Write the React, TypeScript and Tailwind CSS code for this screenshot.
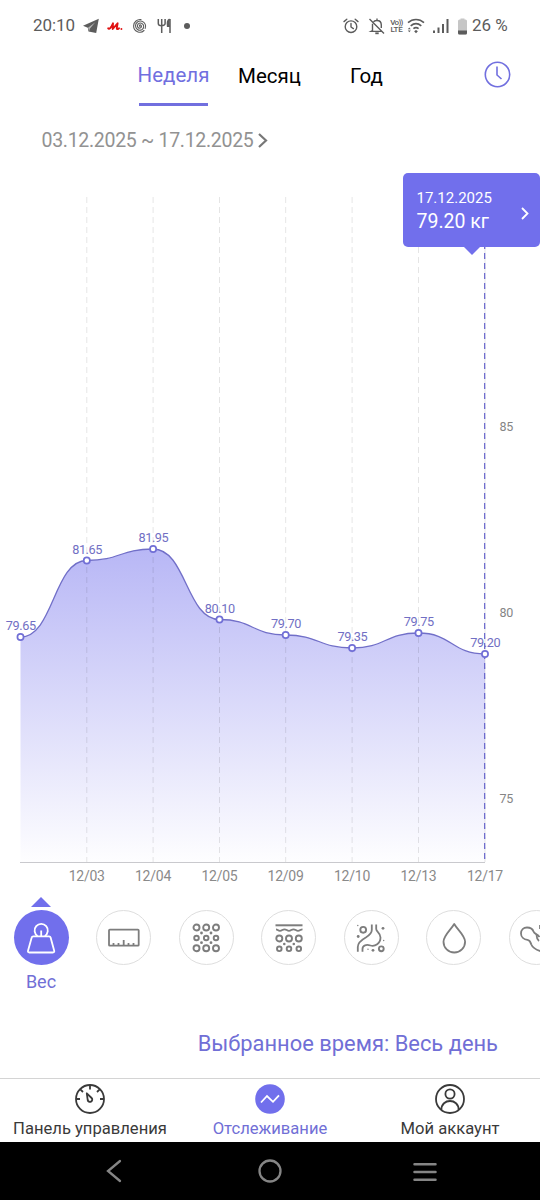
import React from 'react';

interface WeightPoint {
  x: number;
  y: number;
  value: string;
  date?: string;
}

const points: WeightPoint[] = [
  { x: 20.5, y: 637, value: '79.65' },
  { x: 86.8, y: 560.5, value: '81.65', date: '12/03' },
  { x: 153.1, y: 549, value: '81.95', date: '12/04' },
  { x: 219.5, y: 619.5, value: '80.10', date: '12/05' },
  { x: 285.7, y: 635, value: '79.70', date: '12/09' },
  { x: 352.1, y: 648, value: '79.35', date: '12/10' },
  { x: 418.5, y: 633, value: '79.75', date: '12/13' },
  { x: 485, y: 654, value: '79.20', date: '12/17' },
];

const yLabels = [
  { y: 427, text: '85' },
  { y: 613, text: '80' },
  { y: 799, text: '75' },
];

const CHART_BOTTOM = 862;

// smooth line with flat tangents at every point
const linePath = points.reduce((path, p, i) => {
  if (i === 0) return `M${p.x} ${p.y}`;
  const prev = points[i - 1];
  const mid = (prev.x + p.x) / 2;
  return `${path} C${mid} ${prev.y} ${mid} ${p.y} ${p.x} ${p.y}`;
}, '');
const areaPath = `${linePath} V${CHART_BOTTOM} H${points[0].x} Z`;

const StatusBar: React.FC = () => (
  <div className="flex h-[50px] items-center pt-0.5 text-[#5c5c5c]">
    <span className="ml-[33px] w-[50px] text-[17px] tracking-[-0.1px]">20:10</span>
    <svg className="h-4 w-4" viewBox="0 0 16 16" fill="currentColor">
      <path d="M0 7.8 15.800 .8 13.2 15 5.500 13.500 4.800 9.800Z" />
      <path d="M5 9.800 12.300 4.300 6.800 10.800 6.300 13Z" fill="#fff" fillOpacity="0.550" />
    </svg>
    <svg className="ml-2 h-4 w-4" viewBox="0 0 16 16" fill="none" stroke="#e01212" strokeWidth="1.9" strokeLinecap="round" strokeLinejoin="round">
      <path d="M1.2 10.3C2 12 4 10 6 5.3L5.7 11 10.6 5.3 9.800 10.3C9.800 11.500 11.300 11.4 12 10.3" />
      <path d="M14.4 11v.1" />
    </svg>
    <svg className="ml-[10px] h-[14px] w-[14px]" viewBox="0 0 14 14" fill="none" stroke="currentColor" strokeWidth="1.1" strokeLinecap="round">
      <path d="M7 7.4C6.2 7.4 6.2 6 7.1 5.9 8.6 5.8 9 8 7.7 8.8 6 9.8 4.2 8.4 4.4 6.5 4.7 4.2 7.4 3.3 9.2 4.6 11.5 6.2 11 9.6 8.7 10.8 5.7 12.2 2.5 9.9 2.5 6.8 2.5 3.5 5.7 1.4 8.9 2.3 12 3.3 13.4 6.5 12.2 9.4" />
      <path d="M11 11.5C7.5 15 .6 12.6.6 7 .6 2.5 4.5.2 8 .6" />
    </svg>
    <svg className="ml-[10px] h-4 w-4" viewBox="0 0 16 16" fill="none" stroke="currentColor" strokeWidth="1.5">
      <path d="M1.300 1v4.500c0 3 6.800 3 6.800 0V1M4.7 1v14" />
      <path d="M13 1v14M12.600 1.3C10 2.5 10.300 6.5 10.600 8.3H12.800" fill="currentColor" />
    </svg>
    <span className="ml-[11px] h-[6px] w-[6px] rounded-full bg-current" />

    <svg className="ml-[153px] h-[16px] w-[16px]" viewBox="0 0 16 16" fill="none" stroke="currentColor" strokeWidth="1.4" strokeLinecap="round">
      <circle cx="8" cy="8.7" r="5.8" />
      <path d="M8 5.5V9l2.4 1.6M1 3.6 3.8 1.3M15 3.6 12.2 1.3" />
    </svg>
    <svg className="ml-[9px] h-[17px] w-[18px]" viewBox="0 0 18 17" fill="none" stroke="currentColor" strokeWidth="1.4">
      <path d="M1.5 1 16 15.5M4.5 5.7V12.5L3 13.4H13.5M5.5 3.8C7 2.5 8 2.5 9 2.5c2.8 0 4.3 2 4.3 4.5v3M9 .5v2" />
      <path d="M7.3 15.3H10.7" strokeWidth="1.8" />
    </svg>
    <div className="ml-[3px] flex w-[15px] flex-col items-center text-[8px] font-medium leading-[7px]">
      <span className="tracking-[-0.7px]">Vo))</span>
      <span className="tracking-[-0.2px]">LTE</span>
    </div>
    <svg className="ml-[3px] h-4 w-[18px]" viewBox="0 0 18 16" fill="none" stroke="currentColor" strokeWidth="1.6">
      <path d="M1 4.7C5.7.4 12.3.4 17 4.7M3.7 7.8C7 5 11 5 14.3 7.8M6.4 10.7c1.7-1.4 3.5-1.4 5.2 0" />
      <path d="m9 12-1.9 1.3L9 15.2l1.9-1.9Z" fill="currentColor" stroke="none" />
      <path d="M2.300 9.500 .8 11.200H3.800ZM2.300 14.200 .8 12.500H3.800Z" fill="currentColor" stroke="none" />
    </svg>
    <svg className="ml-[8px] h-4 w-4" viewBox="0 0 16 16" fill="currentColor">
      <path d="M0 12.500h2V15H0zM4.5 9.500h2V15h-2zM9 6h2v9H9zM13.5 1h2v14h-2z" />
    </svg>
    <svg className="ml-[9px] h-[17px] w-[9px]" viewBox="0 0 9 17">
      <path d="M2.5 1.5V.5h4v1h1q1.5 0 1.5 1.5v12q0 1.5-1.5 1.5h-6Q0 16.500 0 15V3Q0 1.500 1.500 1.500Z" fill="#c6c6c6" />
      <path d="M0 12.500h9V15q0 1.500-1.500 1.500h-6Q0 16.500 0 15Z" fill="#5c5c5c" />
    </svg>
    <span className="ml-[5px] whitespace-nowrap text-[17px]">26 %</span>
  </div>
);

const PeriodTabs: React.FC = () => (
  <div className="flex h-14 items-start text-[20.5px] leading-[24px] text-black">
    <button className="ml-[139px] flex h-14 w-[69px] flex-col items-center justify-between border-b-[3px] border-[#716fdf] pt-[13px] text-[#716fdf]">
      <span className="whitespace-nowrap">Неделя</span>
    </button>
    <button className="ml-[30px] w-[64px] pt-[14px] text-left">Месяц</button>
    <button className="ml-[48px] w-[34px] pt-[14px] text-left">Год</button>
    <svg className="ml-[99.5px] mt-[11px] h-[27px] w-[27px]" viewBox="0 0 27 27" fill="none" stroke="#716fdf" strokeWidth="1.6">
      <circle cx="13.500" cy="13.500" r="12.200" />
      <path d="M13 5.500V14l4.500 4" />
    </svg>
  </div>
);

const WeightChart: React.FC = () => (
  <div className="relative h-[731px]">
    <svg className="block h-[731px] w-[540px] font-[Roboto,sans-serif]" viewBox="0 159 540 731">
      <defs>
        <linearGradient id="area" x1="0" y1="549" x2="0" y2="862" gradientUnits="userSpaceOnUse">
          <stop offset="0" stopColor="#716fec" stopOpacity="0.5" />
          <stop offset="1" stopColor="#716fec" stopOpacity="0.01" />
        </linearGradient>
      </defs>
      <path d={areaPath} fill="url(#area)" />
      {points.slice(1).map((p) => (
        <path key={p.date} d={`M${p.x} 197V${CHART_BOTTOM}`} stroke="#000" strokeOpacity="0.1" strokeDasharray="6 4" />
      ))}
      <path d="M20 862.500H485" stroke="#c9c9cd" />
      <path d="M484.700 240V862" stroke="#625fc8" strokeWidth="1.200" strokeDasharray="6 4" strokeDashoffset="-3" />
      <path d={linePath} fill="none" stroke="#716fc8" strokeWidth="1.300" />
      {points.map((p) => (
        <g key={p.x}>
          <circle cx={p.x} cy={p.y} r="3.100" fill="#fff" stroke="#716fd6" strokeWidth="1.700" />
          <text x={p.x + 0.3} y={p.y - 7} textAnchor="middle" fontSize="12.700" letterSpacing="-0.400" fill="#716fc4">{p.value}</text>
          {p.date && (
            <text x={p.x - 0.1} y="880.500" textAnchor="middle" fontSize="14" letterSpacing="-0.250" fill="#8a8a8a">{p.date}</text>
          )}
        </g>
      ))}
      {yLabels.map((l) => (
        <text key={l.text} x="499.500" y={l.y + 4.3} fontSize="12.500" letterSpacing="-0.200" fill="#858585">{l.text}</text>
      ))}
    </svg>
    <div className="absolute right-0 top-[14px] flex h-[73.500px] w-[137.500px] items-center justify-between rounded-[5px] bg-[#716fec] pl-[14px] pr-[11px] text-white">
      <div className="pt-[3px]">
        <div className="text-[15px] leading-[22px]">17.12.2025</div>
        <div className="text-[19.500px] leading-[26px]">79.20 кг</div>
      </div>
      <svg className="mt-[8px] h-[13px] w-[8px]" viewBox="0 0 8 13" fill="none" stroke="currentColor" strokeWidth="1.800">
        <path d="m1 1 5.500 5.500L1 12" />
      </svg>
      <svg className="absolute left-[60px] top-[73px] h-[9px] w-[18px]" viewBox="0 0 18 9">
        <path d="M0 0h18L9 9Z" fill="#716fec" />
      </svg>
    </div>
  </div>
);

interface RingProps {
  rings: number[][];
  dots: number[][];
}

const Rings: React.FC<RingProps> = ({ rings, dots }) => (
  <>
    {rings.map(([x, y, r]) => (
      <circle key={`${x}-${y}`} cx={x} cy={y} r={r} strokeWidth="1.900" />
    ))}
    {dots.map(([x, y, r]) => (
      <circle key={`${x}-${y}`} cx={x} cy={y} r={r} fill="currentColor" stroke="none" />
    ))}
  </>
);

const metricIcons: { name: string; icon: React.ReactNode }[] = [
  {
    name: 'weight',
    icon: (
      <>
        <path d="M8.300 14.300H24q1.300 0 1.600 1.200l3.600 13.200q.4 1.800-1.300 1.800H4.300q-1.700 0-1.300-1.800l3.700-13.200q.3-1.200 1.600-1.200Z" />
        <path d="M12.600 14A6.600 6.600 0 1 1 19.800 14M16.200 8.500v5.500" />
      </>
    ),
  },
  {
    name: 'size',
    icon: (
      <>
        <rect x="1" y="7.700" width="29.700" height="16" rx=".8" />
        <path d="M5.500 24v-3M10.500 24v-3M15.700 24v-6M20.500 24v-3M25.500 24v-3" />
      </>
    ),
  },
  {
    name: 'fat',
    icon: (
      <Rings
        rings={[[6.5, 5.5, 3], [16.2, 5.5, 3], [26, 5.5, 3], [6.500, 16, 2.300], [16.200, 16, 2.300], [26, 16, 2.300], [6.500, 26.200, 3], [16.200, 26.200, 3], [26, 26.200, 3]]}
        dots={[[11.500, 11, 1.400], [21, 11, 1.400], [11.500, 20.700, 1.400], [21, 20.700, 1.400]]}
      />
    ),
  },
  {
    name: 'subcutaneous',
    icon: (
      <>
        <path d="M2.500 3.300H29.500" strokeWidth="2" />
        <path d="M3 7.300C4.500 7.300 5 8.800 7 8.800s2.500-1.500 4.500-1.500S14 8.800 16 8.800s2.500-1.500 4.500-1.500S23 8.800 25 8.800s2.500-1.500 4.500-1.500" strokeWidth="1.800" />
        <Rings
          rings={[[6.300, 16.500, 3], [16, 16.500, 3], [25.800, 16.500, 3], [6.300, 26.800, 2.300], [16, 26.800, 2.300], [25.800, 26.800, 2.300]]}
          dots={[[11.300, 22, 1.300], [20.800, 22, 1.300]]}
        />
      </>
    ),
  },
  {
    name: 'visceral',
    icon: (
      <>
        <path d="M16.800 2.500V8c0 3-2 5-6 7.500C5.500 18.500 2.800 21 2.800 25v4.700M21.200 2.500V7c0 3 4.300 3.500 4.300 8.500 0 6-5.500 9.300-10 8C11.500 22.300 7.500 23 7.500 27v2.700" />
        <Rings
          rings={[[8.200, 7.800, 2.900], [26.300, 26.800, 2.400]]}
          dots={[[28, 6.300, 1.400], [3.200, 14.500, 1.400], [18, 28.300, 1.400], [2.800, 3.500, 0.700], [28.700, 18.500, 0.700], [13, 27.300, 0.700]]}
        />
      </>
    ),
  },
  {
    name: 'water',
    icon: <path d="M16.200 2C13.500 7 5.500 13.500 5.500 19.700a10.800 10.800 0 0 0 21.600 0C27.100 13.500 19 7 16.200 2Z" />,
  },
  {
    name: 'muscle',
    icon: (
      <>
        <path d="M22 29.500C16 28 12.500 25.500 11.300 22.500 10.500 20 10 18 7.500 17.800 4 17.500 1 15 1 11.500 1 8 3.500 5.500 7 5.500 10.500 5.500 12.500 6.500 13.500 9.500 14.300 12 18 12.500 19.500 15" />
        <path d="M19 19C17 17.500 16.500 15.500 16.700 13M20 3v4" />
      </>
    ),
  },
];

const MetricPicker: React.FC = () => (
  <div className="flex h-[118px] overflow-hidden pl-[0.5px] pt-[6px]">
    {metricIcons.map((m, i) => (
      <div key={m.name} className="ml-[13px] mr-[14.500px] flex w-[55px] shrink-0 flex-col items-center">
        <svg className="h-[11px] w-5" viewBox="0 0 20 11">
          {i === 0 && <path d="M10 1 20 11H0Z" fill="#716fec" />}
        </svg>
        <div
          className={
            i === 0
              ? 'mt-[3px] flex h-[55px] w-[55px] items-center justify-center rounded-full bg-[#716fec] text-white'
              : 'mt-[3px] flex h-[55px] w-[55px] items-center justify-center rounded-full border border-[#dedede] text-[#7d7d7d]'
          }
        >
          <svg className="h-8 w-8 shrink-0" viewBox="0 0 32 32" fill="none" stroke="currentColor" strokeWidth="1.800" strokeLinejoin="round">
            {m.icon}
          </svg>
        </div>
        {i === 0 && <span className="mt-[6px] text-[18px] leading-[22px] text-[#716fd6]">Вес</span>}
      </div>
    ))}
  </div>
);

const BottomNav: React.FC = () => (
  <nav className="grid h-16 grid-cols-3 border-t border-[#d4d4d4] bg-white text-[16.600px] leading-[20px] text-[#3a3a3a]">
    <div className="flex flex-col items-center pt-[5px]">
      <svg className="h-[30px] w-[30px]" viewBox="0 0 30 30" fill="none" stroke="currentColor" strokeWidth="1.800">
        <circle cx="15" cy="15" r="14" />
        <path d="M15 1v4.500M1 15h4M25 15h4M5.300 5.300 8 8M24.700 5.300 22 8" />
        <path d="M11.800 9.300 12.700 16a2.300 2.300 0 1 0 3.900-2Z" strokeLinejoin="round" />
      </svg>
      <span className="mt-[5px] whitespace-nowrap">Панель управления</span>
    </div>
    <div className="flex flex-col items-center pt-[5px] text-[#716fd6]">
      <svg className="h-[30px] w-[30px]" viewBox="0 0 30 30" fill="none">
        <circle cx="15" cy="15" r="14.800" fill="#716fec" />
        <path d="m6 18.500 6-6.500 6 5.800 6-6.500" stroke="#fff" strokeWidth="1.800" />
      </svg>
      <span className="mt-[5px]">Отслеживание</span>
    </div>
    <div className="flex flex-col items-center pt-[5px]">
      <svg className="h-[30px] w-[30px]" viewBox="0 0 30 30" fill="none" stroke="currentColor" strokeWidth="1.800">
        <circle cx="15" cy="15" r="14" />
        <circle cx="15" cy="10" r="4.600" />
        <path d="M6.300 26C6.300 14 23.700 14 23.700 26" />
      </svg>
      <span className="mt-[5px]">Мой аккаунт</span>
    </div>
  </nav>
);

const SystemBar: React.FC = () => (
  <div className="flex h-[58px] items-center justify-between bg-black pl-[106px] pr-[102px] text-[#858585]">
    <svg className="h-6 w-4" viewBox="0 0 16 24" fill="none" stroke="currentColor" strokeWidth="2.300" strokeLinecap="round">
      <path d="M14 2 2 12l12 10" />
    </svg>
    <svg className="ml-[6px] h-6 w-6" viewBox="0 0 24 24" fill="none" stroke="currentColor" strokeWidth="2.300">
      <circle cx="12" cy="12" r="10.500" />
    </svg>
    <svg className="mt-px h-6 w-[26px]" viewBox="0 0 26 24" fill="none" stroke="currentColor" strokeWidth="2.500" strokeLinecap="round">
      <path d="M2.500 4.200h21M2.500 12h21M2.500 19.800h21" />
    </svg>
  </div>
);

const App: React.FC = () => {
  return (
    <div className="flex h-[1200px] w-[540px] flex-col overflow-hidden bg-white font-[Roboto,sans-serif]">
      <StatusBar />
      <PeriodTabs />
      <div className="flex h-[53px] items-center pl-[41.500px] pt-[17px] text-[19.500px] tracking-[-0.300px] text-[#929292]">
        <span className="w-[211px] whitespace-nowrap">03.12.2025 ~ 17.12.2025</span>
        <svg className="mb-[2px] ml-[5.500px] h-[15px] w-[10px]" viewBox="0 0 10 15" fill="none" stroke="#777" strokeWidth="2.200">
          <path d="m1 1 7 6.500L1 14" />
        </svg>
      </div>
      <WeightChart />
      <MetricPicker />
      <div className="flex h-[70px] items-center justify-end pr-[42px] pt-[3px] text-[21.900px] text-[#716fd6]">
        <span className="whitespace-nowrap">Выбранное время: Весь день</span>
      </div>
      <BottomNav />
      <SystemBar />
    </div>
  );
};

export default App;
